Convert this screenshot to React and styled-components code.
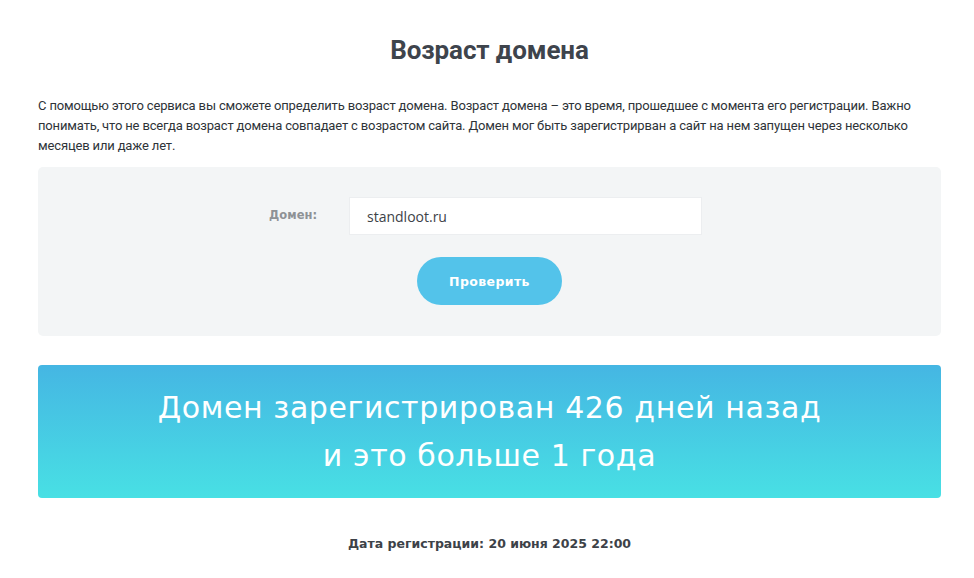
import React from "react";
import styled, { createGlobalStyle } from "styled-components";

const Global = createGlobalStyle`
  html, body { margin: 0; padding: 0; background: #fff; }
  body { font-family: "Open Sans", "Noto Sans", sans-serif; color: #3d4248; }
`;

const Page = styled.main`
  width: 903px;
  padding: 34px 0 0 38px;
`;

const Title = styled.h1`
  margin: 0;
  text-align: center;
  font-family: "Roboto", sans-serif;
  font-weight: 700;
  font-size: 26px;
  line-height: 32px;
  letter-spacing: -0.1px;
  color: #3e444c;
`;

const Intro = styled.p`
  margin: 30px 0 0;
  font-family: "Roboto", sans-serif;
  font-size: 13px;
  line-height: 20px;
  letter-spacing: -0.15px;
  color: #2e3338;
`;

const FormCard = styled.section`
  margin-top: 11px;
  height: 169px;
  box-sizing: border-box;
  background: #f3f5f6;
  border-radius: 5px;
  padding-top: 30px;
  display: flex;
  flex-direction: column;
  align-items: center;
`;

const FieldRow = styled.div`
  align-self: stretch;
  display: grid;
  grid-template-columns: 279px 353px;
  column-gap: 32px;
  align-items: start;
`;

const Label = styled.label`
  text-align: right;
  padding-top: 11px;
  font-family: "DejaVu Sans", sans-serif;
  font-weight: 700;
  font-size: 11.5px;
  color: #8e9296;
`;

const Input = styled.input`
  box-sizing: border-box;
  height: 38px;
  width: 353px;
  border: 1px solid #eceef0;
  background: #fff;
  padding: 0 17px;
  font-family: "Open Sans", sans-serif;
  font-size: 14px;
  color: #3d4248;
  outline: none;
`;

const Button = styled.button`
  margin-top: 22px;
  width: 145px;
  height: 48px;
  border: 0;
  border-radius: 24px;
  background: #53c3ea;
  color: #fff;
  font-family: "DejaVu Sans", sans-serif;
  font-weight: 700;
  font-size: 12.5px;
  letter-spacing: 0.4px;
  cursor: pointer;
`;

const Result = styled.section`
  margin-top: 29px;
  height: 133px;
  box-sizing: border-box;
  border-radius: 4px;
  background: linear-gradient(180deg, #45b6e3 0%, #48e0e4 100%);
  display: flex;
  align-items: center;
  justify-content: center;
  text-align: center;
  color: #fff;
  font-family: "DejaVu Sans", sans-serif;
  font-weight: 400;
  font-size: 30px;
  line-height: 48px;
  letter-spacing: 0.6px;
`;

const DateLine = styled.p`
  margin: 38px 0 0;
  text-align: center;
  font-family: "DejaVu Sans", sans-serif;
  font-weight: 700;
  font-size: 12.5px;
  color: #3d4248;
`;

export default function App() {
  return (
    <>
      <Global />
      <Page>
        <Title>Возраст домена</Title>
        <Intro>
          С помощью этого сервиса вы сможете определить возраст домена. Возраст домена – это время, прошедшее с момента его регистрации. Важно понимать, что не всегда возраст домена совпадает с возрастом сайта. Домен мог быть зарегистрирван а сайт на нем запущен через несколько месяцев или даже лет.
        </Intro>
        <FormCard>
          <FieldRow>
            <Label htmlFor="domain">Домен:</Label>
            <Input id="domain" defaultValue="standloot.ru" />
          </FieldRow>
          <Button type="button">Проверить</Button>
        </FormCard>
        <Result>
          <div>
            Домен зарегистрирован 426 дней назад
            <br />
            и это больше 1 года
          </div>
        </Result>
        <DateLine>Дата регистрации: 20 июня 2025 22:00</DateLine>
      </Page>
    </>
  );
}
